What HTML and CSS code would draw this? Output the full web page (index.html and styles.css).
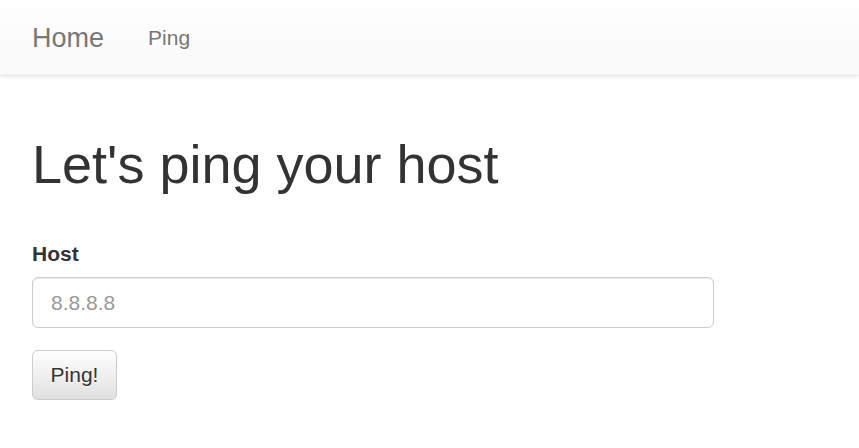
FILE: index.html
```html
<!DOCTYPE html>
<html lang="en">
<head>
  <meta charset="UTF-8">
  <meta name="viewport" content="width=device-width, initial-scale=1.0">
  <title>Ping</title>
  <link rel="stylesheet" href="styles.css">
</head>
<body>
  <nav class="navbar">
    <a class="brand" href="#">Home</a>
    <a class="nav-link" href="#">Ping</a>
  </nav>

  <main class="container">
    <h1>Let's ping your host</h1>
    <form class="ping-form">
      <div class="form-group">
        <label for="host">Host</label>
        <input id="host" class="form-control" type="text" placeholder="8.8.8.8">
      </div>
      <button class="btn" type="button">Ping!</button>
    </form>
  </main>
</body>
</html>
```

FILE: styles.css
```css
body {
  font-family: "Liberation Sans", Arial, sans-serif;
  font-size: 21px;
  color: #333;
  margin: 0;
  padding: 0;
  background: #fff;
}
.navbar {
  height: 76px;
  box-sizing: border-box;
  display: flex;
  align-items: center;
  padding: 1px 32px 0;
  background: linear-gradient(to bottom, #fff 0%, #f8f8f8 100%);
  border-bottom: 1px solid #e7e7e7;
  box-shadow: inset 0 1px 0 rgba(255,255,255,0.15), 0 1px 5px rgba(0,0,0,0.075);
}
.navbar a {
  color: #777;
  text-decoration: none;
}
.brand {
  font-size: 27px;
  padding-right: 22px;
}
.nav-link {
  font-size: 21px;
  padding: 0 22px;
}
.container {
  padding: 0 32px;
}
h1 {
  font-size: 54px;
  font-weight: 500;
  line-height: 1.1;
  margin: 59px 0 15px;
}
.ping-form {
  width: 682px;
}
.form-group {
  margin-bottom: 22px;
}
label {
  display: block;
  font-weight: bold;
  margin-bottom: 11px;
  margin-top: 48px;
}
.form-control {
  display: block;
  width: 100%;
  height: 51px;
  box-sizing: border-box;
  padding: 9px 18px;
  font-family: inherit;
  font-size: 21px;
  color: #555;
  border: 1px solid #ccc;
  border-radius: 6px;
  box-shadow: inset 0 1px 1px rgba(0,0,0,0.075);
}
.form-control::placeholder {
  color: #999;
}
.btn {
  width: 85px;
  height: 50px;
  padding: 9px 0;
  font-family: inherit;
  font-size: 21px;
  color: #333;
  background: linear-gradient(to bottom, #fff 0%, #e0e0e0 100%);
  border: 1px solid #ccc;
  border-radius: 6px;
  text-shadow: 0 1px 0 #fff;
  box-shadow: inset 0 1px 0 rgba(255,255,255,0.15), 0 1px 1px rgba(0,0,0,0.075);
  cursor: pointer;
}
```
